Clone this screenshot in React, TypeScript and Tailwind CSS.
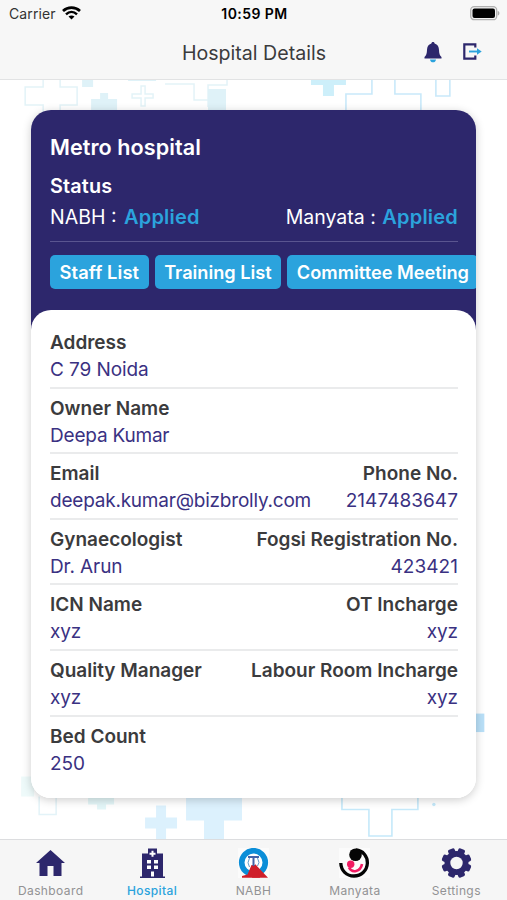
import React from 'react';

const NAVY = '#2d276c';
const SKY = '#2ba3dd';

function BackgroundPattern() {
  return (
    <svg className="absolute inset-0 h-full w-full" viewBox="0 0 507 760" fill="none">
      <g stroke="#e3f3f8" strokeWidth="1.5">
        <path d="M43 0V7H25V25H43V34M60 0V7H77V25H60V34" />
        <path d="M132 14H141V6H145V14H153V18H145V26H141V18H132Z" />
        <path d="M165 4H194V20H208M227 0V5H208V27" />
      </g>
      <g fill="#dff2f8">
        <path d="M82 0H93V7H82ZM100 13H108V19H117V30H91V19H100ZM208 9H226V30H208Z" />
        <path d="M128 0H156V1H128Z" />
      </g>
      <path d="M311 0H346V5H334V16H323V5H311Z" fill="#cdeffa" />
      <g stroke="#c9e9fa" strokeWidth="1.6">
        <path d="M372 0V14H346V32M395 0V14H421V32" />
        <path d="M436 0V16H450V0" />
      </g>
      <path d="M470 634H484.500V652.500H470Z" fill="#b9e0f8" />
      <path d="M342 715V730H369V756.500H392V730H418V715" stroke="#c5e9fa" strokeWidth="1.6" />
      <circle cx="434" cy="725" r="1.700" fill="#c5e9fa" />
      <path d="M21 697H34V717H21Z" fill="#eefafa" />
      <path d="M39 717V735H56V717" stroke="#e3f3f8" strokeWidth="1.5" />
      <path d="M88 717H114V725H106V730H97V725H88Z" fill="#e3f6f8" />
      <path d="M156 726H166V738H177V749H166V760H156V749H145V738H156Z" fill="#dcf1fd" />
      <path d="M186 717H242V741H224V760H204V741H186Z" fill="#dcf1fd" />
    </svg>
  );
}

function StatusBar() {
  return (
    <div className="grid h-[27px] grid-cols-3 items-center pr-[7px] pl-[9px] text-black">
      <div className="flex items-center gap-[6px]">
        <span className="text-[14px] tracking-[0.1px] text-[#333]">Carrier</span>
        <svg className="mb-px h-[14px] w-[19px]" viewBox="0 0 19 14" fill="none" stroke="#000">
          <path d="M1 5C5.800.500 13.200.500 18 5" strokeWidth="2.700" />
          <path d="M4 8.300C7.300 5.300 11.700 5.300 15 8.300" strokeWidth="2.500" />
          <path d="M9.500 13.500L6.500 10.500C8.200 9 10.800 9 12.500 10.500Z" fill="#000" stroke="none" />
        </svg>
      </div>
      <span className="text-center text-[14px] font-semibold tracking-[0.45px]">10:59 PM</span>
      <svg className="h-[15px] w-[31px] justify-self-end" viewBox="0 0 31 15">
        <rect x="1.700" y=".7" width="26" height="13" rx="3.500" fill="#f2f2f2" stroke="#b0b0b0" strokeWidth="1.300" />
        <rect x="3.500" y="2.500" width="22.500" height="9.500" rx="2" fill="#000" />
        <path d="M28.700 5C31 5.500 31 9 28.700 9.500Z" fill="#aaa" />
      </svg>
    </div>
  );
}

function TitleBar() {
  return (
    <div className="grid h-[51px] grid-cols-[1fr_auto_1fr] items-center pl-px">
      <span />
      <h1 className="text-[19.6px] leading-6 text-[#3b3b3d]">Hospital Details</h1>
      <div className="flex items-center justify-end gap-[20px] pr-[25px]">
        <svg className="h-[21px] w-[18px]" viewBox="0 0 18 21">
          <path d="M6 17.500H12C11.700 19.500 10.500 20.300 9 20.300S6.300 19.500 6 17.500Z" fill={SKY} />
          <path d="M9 0C10 0 10.600.700 10.600 1.600C13.600 2.400 14.900 4.800 15 8C15.100 11.500 15.700 13.500 17.500 15V16.500H.5V15C2.300 13.500 2.900 11.500 3 8C3.100 4.800 4.400 2.400 7.400 1.600C7.400.700 8 0 9 0Z" fill={NAVY} />
        </svg>
        <svg className="mb-[2px] h-[17px] w-[20px]" viewBox="0 0 20 17" fill="none">
          <path d="M13.300 4.500V1.300H2.300V15.700H13.300V12.500" stroke={NAVY} strokeWidth="2.200" />
          <path d="M7 8.500H16" stroke={SKY} strokeWidth="1.900" />
          <path d="M15 5.300L19.700 8.500L15 11.700Z" fill={SKY} />
        </svg>
      </div>
    </div>
  );
}

function ActionButton({ label, className }: { label: string; className: string }) {
  return (
    <button
      className={`h-[34.5px] shrink-0 rounded-[5px] bg-[#2ba3dd] px-[9.5px] pt-px font-semibold whitespace-nowrap text-white ${className}`}
    >
      {label}
    </button>
  );
}

type Field = { label: string; value: string; tracking?: string };

const rows: Field[][] = [
  [{ label: 'Address', value: 'C 79 Noida' }],
  [{ label: 'Owner Name', value: 'Deepa Kumar', tracking: 'tracking-[-0.2px]' }],
  [
    { label: 'Email', value: 'deepak.kumar@bizbrolly.com', tracking: 'tracking-[-0.22px]' },
    { label: 'Phone No.', value: '2147483647', tracking: 'tracking-[0.05px]' },
  ],
  [
    { label: 'Gynaecologist', value: 'Dr. Arun' },
    { label: 'Fogsi Registration No.', value: '423421', tracking: 'tracking-[0.05px]' },
  ],
  [
    { label: 'ICN Name', value: 'xyz' },
    { label: 'OT Incharge', value: 'xyz' },
  ],
  [
    { label: 'Quality Manager', value: 'xyz' },
    { label: 'Labour Room Incharge', value: 'xyz' },
  ],
  [{ label: 'Bed Count', value: '250' }],
];

function DetailRow({ fields }: { fields: Field[] }) {
  return (
    <div className="flex h-[65.6px] justify-between border-b-2 border-[#eaebec] pt-[6px] last:border-b-0">
      {fields.map((f, i) => (
        <div key={f.label} className={i === 1 ? 'text-right' : ''}>
          <div className="text-[19px] leading-[27px] font-semibold whitespace-nowrap text-[#3b3b3d]">{f.label}</div>
          <div className={`text-[19px] leading-[27.5px] whitespace-nowrap text-[#3a3182] ${f.tracking ?? 'tracking-[-0.1px]'}`}>
            {f.value}
          </div>
        </div>
      ))}
    </div>
  );
}

function HospitalCard() {
  return (
    <section className="relative mx-auto mt-[30px] w-[445px] overflow-hidden rounded-[20px] bg-[linear-gradient(#2d276c_240px,#fff_240px)] shadow-[0_2px_10px_rgba(0,0,0,0.2)]">
      <div className="h-[200px] pt-[22px] pr-[18px] pl-[19px] text-white">
        <h2 className="text-[21.6px] leading-[31px] font-semibold tracking-[0.05px]">Metro hospital</h2>
        <h3 className="mt-[8px] text-[19.8px] leading-[30px] font-semibold tracking-[0.15px]">Status</h3>
        <div className="flex justify-between text-[19.5px] leading-[32px]">
          <p>NABH : <b className="ml-[2px] text-[20px] font-semibold tracking-[0.2px] text-[#2ba3dd]">Applied</b></p>
          <p>Manyata : <b className="ml-px text-[20px] font-semibold tracking-[0.2px] text-[#2ba3dd]">Applied</b></p>
        </div>
        <div className="mt-[8px] h-px bg-[#5a5590]" />
        <div className="-mr-[18px] mt-[13px] flex gap-[6px] overflow-hidden">
          <ActionButton label="Staff List" className="text-[18.3px] tracking-[0.1px]" />
          <ActionButton label="Training List" className="text-[18.2px]" />
          <ActionButton label="Committee Meeting" className="text-[18.2px]" />
        </div>
      </div>
      <div className="h-[488px] rounded-[20px] bg-white pt-[13.5px] pr-[18px] pl-[19px]">
        {rows.map((fields) => (
          <DetailRow key={fields[0].label} fields={fields} />
        ))}
      </div>
    </section>
  );
}

const icons: Record<string, React.ReactNode> = {
  Dashboard: (
    <path d="M15.500 2L30 15H26.500V28H18.500V18H12.500V28H4.500V15H1Z" fill={NAVY} />
  ),
  Hospital: (
    <>
      <path d="M11 .5H20V5.500H26V28.500H28V30H3V28.500H5V5.500H11Z" fill={NAVY} />
      <path d="M14.500 2.700H16.500V4.700H18.500V6.700H16.500V8.700H14.500V6.700H12.500V4.700H14.500ZM10 12H14V15.500H10ZM17 12H21V15.500H17ZM10 17.500H14V21H10ZM17 17.500H21V21H17ZM14 23.500H17V28.500H14Z" fill="#fff" />
    </>
  ),
  NABH: (
    <>
      <rect x="0" y="0" width="31" height="30" fill="#fbfbfb" />
      <circle cx="15.500" cy="14.500" r="11.800" fill="#fff" stroke="#0b8ed8" strokeWidth="5.600" />
      <path d="M17 16L30 29.700H14Z" fill="#cf1f2b" />
      <path d="M13.500 17H18L22 29.700H4V28L9.500 26.500Z" fill="#cf1f2b" />
      <path d="M10 9H21M15.500 9V18" stroke="#4463a8" strokeWidth="2" />
      <path d="M11.500 10Q8.500 15 11.500 19M19.500 10Q22.500 15 19.500 18" stroke="#5e9ccc" strokeWidth="1" fill="none" />
    </>
  ),
  Manyata: (
    <>
      <rect x="0" y="0" width="31" height="30" fill="#fbfbfb" />
      <path d="M17 2C24 2.500 28.600 8.500 28.400 15C28 23 22 28 15 28C7.500 28 2 22.500 1.800 15" stroke="#050505" strokeWidth="3.300" fill="none" />
      <circle cx="16.500" cy="6.800" r="6.300" fill="#050505" />
      <circle cx="11.700" cy="16.200" r="3.700" fill="#f21c63" />
      <path d="M10 19.500C13 25.500 21.500 24 23 16" stroke="#f21c63" strokeWidth="2.600" fill="none" />
    </>
  ),
  Settings: (
    <>
      <g fill={NAVY}>
        <circle cx="15.500" cy="15" r="12" />
        {[22.5, 67.5, 112.5, 157.5, 202.5, 247.5, 292.5, 337.5].map((a) => (
          <rect key={a} x="12" y="0" width="7" height="7" rx="1.800" transform={`rotate(${a} 15.500 15)`} />
        ))}
      </g>
      <circle cx="15.500" cy="15" r="6.200" fill="#f6f6f6" />
    </>
  ),
};

function TabBar() {
  return (
    <nav className="relative grid h-[61px] grid-cols-5 border-t-[1.5px] border-[#dcdddf] bg-[#f6f6f6] pt-[8px]">
      {Object.keys(icons).map((name) => (
        <div key={name} className="flex flex-col items-center">
          <svg className="h-[30px] w-[31px]" viewBox="0 0 31 30">{icons[name]}</svg>
          <span className={`mt-[5px] text-[12px] leading-4 tracking-[0.4px] ${name === 'Hospital' ? 'font-medium text-[#2ba3dd]' : 'text-[#929294]'}`}>
            {name}
          </span>
        </div>
      ))}
    </nav>
  );
}

export default function App() {
  return (
    <div className="flex h-[900px] w-[507px] flex-col overflow-hidden bg-white font-['Inter','Liberation_Sans',sans-serif]">
      <header className="h-[79.5px] shrink-0 border-b border-[#e2e3e4] bg-[#f7f7f7]">
        <StatusBar />
        <TitleBar />
      </header>
      <main className="relative flex-1">
        <BackgroundPattern />
        <HospitalCard />
      </main>
      <TabBar />
    </div>
  );
}
